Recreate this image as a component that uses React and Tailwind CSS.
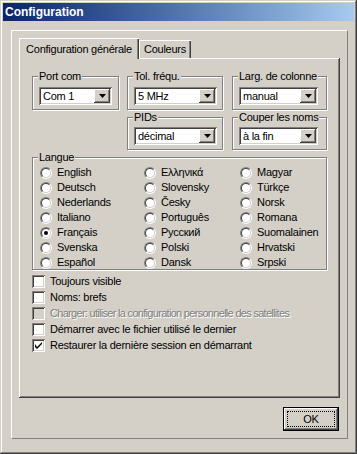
import React from "react"

const raised = "shadow-[inset_-1px_-1px_#404040,inset_1px_1px_#fff,inset_-2px_-2px_#808080]"
const sunken = "shadow-[inset_1px_1px_#808080,inset_-1px_-1px_#fff,inset_2px_2px_#404040,inset_-2px_-2px_#d4d0c8]"
const etched = "border border-[#808080] shadow-[inset_1px_1px_#fff,1px_1px_#fff]"

function Arrow() {
  return (
    <svg width="7" height="4" viewBox="0 0 7 4">
      <polygon points="0,0 7,0 3.5,4" fill="#000" />
    </svg>
  )
}

function Combo({ value, width }) {
  return (
    <div className={`flex h-[18px] bg-white p-[2px] ${sunken} ${width}`}>
      <span className="flex-1 pl-[2px] leading-[14px] text-black">{value}</span>
      <span className={`flex h-[14px] w-[16px] items-center justify-center bg-[#d4d0c8] ${raised}`}>
        <Arrow />
      </span>
    </div>
  )
}

function Group({ label, width, height, children, pad = "pl-[6px] pt-[10px]" }) {
  return (
    <div className={`relative ${etched} ${width} ${height} ${pad}`}>
      <span className="absolute -top-[7px] left-[5px] bg-[#d4d0c8] px-[1px] leading-[13px]">{label}</span>
      {children}
    </div>
  )
}

function Radio({ label, checked }) {
  return (
    <div className="flex h-[15px] items-center gap-[5px]">
      <span className="flex h-[12px] w-[12px] rounded-full border border-[#808080] border-r-white border-b-white">
        <span className="flex h-full w-full items-center justify-center rounded-full border border-[#404040] border-r-[#d4d0c8] border-b-[#d4d0c8] bg-white">
          {checked && <span className="h-[4px] w-[4px] rounded-full bg-black" />}
        </span>
      </span>
      <span className="leading-[13px]">{label}</span>
    </div>
  )
}

function Check({ label, checked, disabled }) {
  return (
    <div className="flex h-[16px] items-center gap-[5px]">
      <span className={`flex h-[13px] w-[13px] items-center justify-center ${sunken} ${disabled ? "bg-[#d4d0c8]" : "bg-white"}`}>
        {checked && (
          <svg width="7" height="7" viewBox="0 0 7 7">
            <path d="M0 2v3l2 2l5-5v-2l-5 5z" fill="#000" />
          </svg>
        )}
      </span>
      <span className={`leading-[13px] ${disabled ? "tracking-[-0.7px] text-[#808080] [text-shadow:1px_1px_#fff]" : ""}`}>{label}</span>
    </div>
  )
}

const langs = [
  ["English", "Ελληνικά", "Magyar"],
  ["Deutsch", "Slovensky", "Türkçe"],
  ["Nederlands", "Česky", "Norsk"],
  ["Italiano", "Português", "Romana"],
  ["Français", "Русский", "Suomalainen"],
  ["Svenska", "Polski", "Hrvatski"],
  ["Español", "Dansk", "Srpski"],
]

export default function App() {
  return (
    <div className="h-[454px] w-[357px] bg-[#d4d0c8] p-[3px] font-['Liberation_Sans',Arial,sans-serif] text-[11px] tracking-[-0.25px] text-black shadow-[inset_-1px_-1px_#404040,inset_1px_1px_#d4d0c8,inset_-2px_-2px_#808080,inset_2px_2px_#fff]">
      {/* title bar */}
      <div className="flex h-[18px] items-center bg-gradient-to-r from-[#0a246a] to-[#a6caf0] pl-[2px] text-[12px] font-bold tracking-normal text-white">
        Configuration
      </div>

      <div className="ml-[8px] mr-[6px] mt-[9px] h-[409px] border border-white border-r-[#808080] border-b-[#808080] px-[7px] pt-[7px]">
        {/* tabs */}
        <div className="flex h-[20px] items-end">
          <div className="relative z-10 -mb-px h-[21px] w-[120px] bg-[#d4d0c8] pt-[3px] text-center shadow-[inset_1px_1px_#fff,inset_-1px_0_#404040,inset_-2px_0_#808080]">
            Configuration générale
          </div>
          <div className="h-[18px] w-[52px] pt-[1px] text-center shadow-[inset_1px_1px_#fff,inset_-1px_0_#404040,inset_-2px_0_#808080]">
            Couleurs
          </div>
        </div>

        {/* tab page */}
        <div className={`h-[340px] w-[321px] pl-[13px] pt-[18px] ${raised}`}>
          <div className="flex gap-[8px]">
            <Group label="Port com" width="w-[87px]" height="h-[34px]">
              <Combo value="Com 1" width="w-[73px]" />
            </Group>
            <div className="flex gap-[9px]">
              <Group label="Tol. fréqu." width="w-[96px]" height="h-[34px]">
                <Combo value="5 MHz" width="w-[83px]" />
              </Group>
              <Group label="Larg. de colonne" width="w-[95px]" height="h-[34px]">
                <Combo value="manual" width="w-[79px]" />
              </Group>
            </div>
          </div>

          <div className="ml-[95px] mt-[7px] flex gap-[9px]">
            <Group label="PIDs" width="w-[96px]" height="h-[33px]" pad="pl-[6px] pt-[9px]">
              <Combo value="décimal" width="w-[83px]" />
            </Group>
            <Group label="Couper les noms" width="w-[95px]" height="h-[33px]" pad="pl-[6px] pt-[9px]">
              <Combo value="à la fin" width="w-[79px]" />
            </Group>
          </div>

          <Group label="Langue" width="w-[295px] mt-[7px]" height="h-[113px]" pad="pl-[7px] pt-[7px]">
            <div className="grid grid-cols-[104px_96px_1fr]">
              {langs.map((row) =>
                row.map((l) => <Radio key={l} label={l} checked={l === "Français"} />)
              )}
            </div>
          </Group>

          <div className="mt-[3px] flex flex-col">
            <Check label="Toujours visible" />
            <Check label="Noms: brefs" />
            <Check label="Charger: utiliser la configuration personnelle des satellites" disabled />
            <Check label="Démarrer avec le fichier utilisé le dernier" />
            <Check label="Restaurer la dernière session en démarrant" checked />
          </div>
        </div>

        {/* buttons */}
        <div className="mr-[1px] mt-[9px] flex justify-end">
          <button className="h-[24px] w-[56px] border border-black">
            <span className={`flex h-full w-full p-[3px] ${raised}`}>
              <span className="flex h-full w-full items-center justify-center outline-1 -outline-offset-1 outline-dotted outline-black">OK</span>
            </span>
          </button>
        </div>
      </div>
    </div>
  )
}
